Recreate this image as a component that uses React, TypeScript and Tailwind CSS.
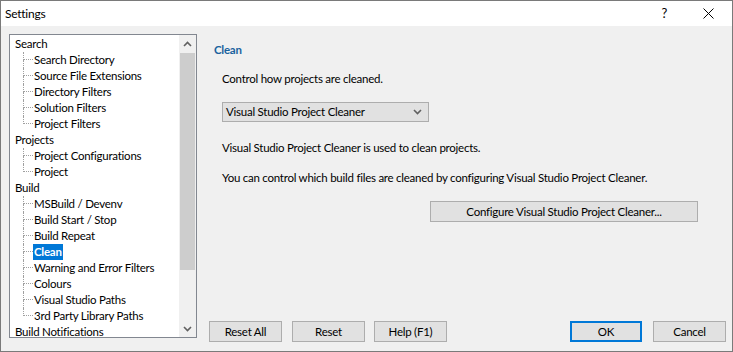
import React from "react";

type Node = { label: string; children?: string[] };

const tree: Node[] = [
  {
    label: "Search",
    children: ["Search Directory", "Source File Extensions", "Directory Filters", "Solution Filters", "Project Filters"],
  },
  { label: "Projects", children: ["Project Configurations", "Project"] },
  {
    label: "Build",
    children: [
      "MSBuild / Devenv",
      "Build Start / Stop",
      "Build Repeat",
      "Clean",
      "Warning and Error Filters",
      "Colours",
      "Visual Studio Paths",
      "3rd Party Library Paths",
    ],
  },
  { label: "Build Notifications" },
];

const font = { fontFamily: 'Lato, "Liberation Sans", Arial, sans-serif' };

function Chevron({ up }: { up?: boolean }) {
  return (
    <svg width="9" height="6" viewBox="0 0 9 6">
      <path
        d={up ? "M1 5 L4.5 1.5 L8 5" : "M1 1 L4.5 4.5 L8 1"}
        fill="none"
        stroke="#606060"
        strokeWidth="1.6"
      />
    </svg>
  );
}

function ChildRow({ label, last }: { label: string; last: boolean }) {
  const selected = label === "Clean";
  return (
    <div className="flex h-[16px] items-stretch">
      <div className="w-[13px] shrink-0" />
      <div className="flex w-[10px] shrink-0 flex-col">
        <div className="h-[8px] border-b border-l border-dotted border-[#a0a0a0]" />
        <div className={last ? "h-[8px]" : "h-[8px] border-l border-dotted border-[#a0a0a0]"} />
      </div>
      <div className="flex items-center">
        <span
          className={
            selected
              ? "bg-[#0078d7] px-[1px] font-bold leading-[16px] text-white"
              : "px-[1px] leading-[16px]"
          }
        >
          {label}
        </span>
      </div>
    </div>
  );
}

function Button({ label, width, primary }: { label: string; width: string; primary?: boolean }) {
  return (
    <button
      className={`${width} flex h-[21px] items-center justify-center bg-[#e1e1e1] text-[11.5px] tracking-[-0.25px] text-black ${
        primary ? "border-2 border-[#0078d7]" : "border border-[#adadad]"
      }`}
      style={font}
    >
      {label}
    </button>
  );
}

export default function App() {
  return (
    <div
      className="flex h-[352px] w-[733px] flex-col border border-[#7a7a7a] bg-[#f0f0f0] text-[11.5px] tracking-[-0.25px] text-black"
      style={font}
    >
      {/* title bar */}
      <div className="flex h-[25px] shrink-0 items-center bg-white">
        <span className="pl-[4px] text-[12px]">Settings</span>
        <span className="ml-auto mr-[36px] text-[13px]">?</span>
        <svg className="mr-[18px]" width="11" height="11" viewBox="0 0 11 11">
          <path d="M0.5 0.5 L10.5 10.5 M10.5 0.5 L0.5 10.5" stroke="#000" strokeWidth="1" />
        </svg>
      </div>

      {/* body */}
      <div className="flex min-h-0 flex-1 pb-[9px] pl-[8px] pr-[6px] pt-[8px]">
        {/* tree */}
        <div className="mb-[4px] flex w-[188px] shrink-0 border border-[#828790] bg-white">
          <div className="flex-1 overflow-hidden pt-[1px]">
            {tree.map((n) => (
              <div key={n.label}>
                <div className="flex h-[16px] items-center pl-[5px]">{n.label}</div>
                {n.children?.map((c, i) => (
                  <ChildRow key={c} label={c} last={i === n.children!.length - 1} />
                ))}
              </div>
            ))}
          </div>
          <div className="flex w-[17px] shrink-0 flex-col bg-[#f0f0f0]">
            <div className="flex h-[17px] items-center justify-center">
              <Chevron up />
            </div>
            <div className="flex-1 pt-[1px]">
              <div className="mx-[1px] h-[217px] bg-[#cdcdcd]" />
            </div>
            <div className="flex h-[17px] items-center justify-center">
              <Chevron />
            </div>
          </div>
        </div>

        {/* right pane */}
        <div className="flex flex-1 flex-col pl-[12px]">
          <div className="ml-[5px] mt-[8px] h-[16px] font-bold leading-[16px] text-[#19629e]">Clean</div>
          <div className="ml-[13px] flex flex-col">
            <div className="mt-[13px] leading-[16px]">Control how projects are cleaned.</div>
            <div className="mt-[15px] flex h-[20px] w-[207px] items-center justify-between border border-[#adadad] bg-[#e1e1e1] pl-[3px] pr-[6px]">
              <span>Visual Studio Project Cleaner</span>
              <Chevron />
            </div>
            <div className="mt-[18px] leading-[16px]">Visual Studio Project Cleaner is used to clean projects.</div>
            <div className="mt-[14px] leading-[16px]">
              You can control which build files are cleaned by configuring Visual Studio Project Cleaner.
            </div>
            <div className="mt-[15px] flex justify-end pr-[28px]">
              <Button label="Configure Visual Studio Project Cleaner..." width="w-[268px]" />
            </div>
          </div>
          <div className="mt-auto flex items-center">
            <Button label="Reset All" width="w-[73px]" />
            <div className="w-[10px]" />
            <Button label="Reset" width="w-[73px]" />
            <div className="w-[9px]" />
            <Button label="Help (F1)" width="w-[73px]" />
            <div className="flex-1" />
            <Button label="OK" width="w-[72px]" primary />
            <div className="w-[11px]" />
            <Button label="Cancel" width="w-[73px]" />
          </div>
        </div>
      </div>
    </div>
  );
}
